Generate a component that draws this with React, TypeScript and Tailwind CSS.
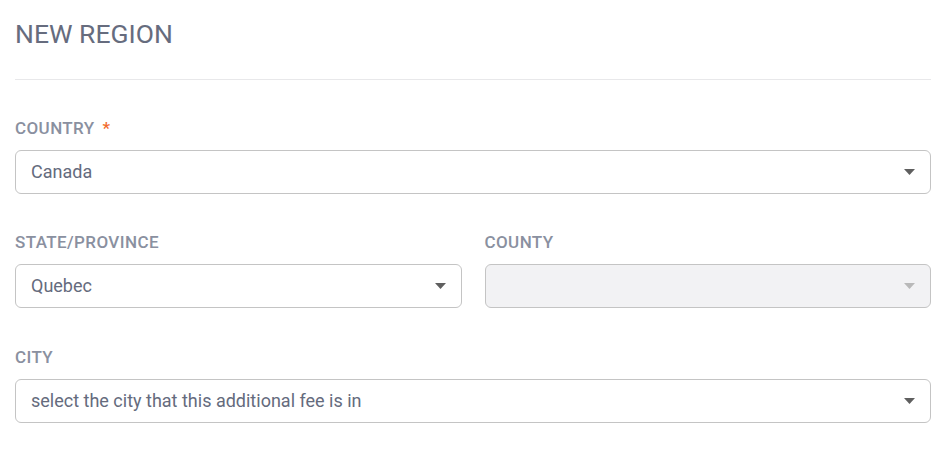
import React from "react";

const font = { fontFamily: "Roboto, 'Noto Sans', sans-serif" };

function Arrow({ disabled }: { disabled?: boolean }) {
  return (
    <svg width="11" height="6" viewBox="0 0 11 6" className="shrink-0">
      <path d="M0 0 L11 0 L5.5 6 Z" fill={disabled ? "#b9b9b9" : "#5f5f5f"} />
    </svg>
  );
}

function Select({ value, disabled }: { value?: string; disabled?: boolean }) {
  return (
    <div
      className={`flex h-[44px] items-center justify-between rounded-[6px] border border-[#c4c4c4] pl-[15px] pr-[15px] ${
        disabled ? "bg-[#f2f2f4]" : "bg-white"
      }`}
    >
      <span className="text-[18px] leading-[22px] text-[#656b7d]">{value}</span>
      <Arrow disabled={disabled} />
    </div>
  );
}

function Label({ children, required }: { children: React.ReactNode; required?: boolean }) {
  return (
    <div className="mb-[12px] flex items-center text-[17px] font-medium leading-[20px] tracking-[0.4px] text-[#8a90a0]">
      {children}
      {required && <span className="ml-[8px] text-[#f26a2b]">*</span>}
    </div>
  );
}

export default function App() {
  return (
    <div className="min-h-[453px] w-[952px] bg-white" style={font}>
      <div className="w-[931px] pl-[15px]">
        <div className="pt-[18px] text-[26.5px] leading-[32px] text-[#666c7e]">NEW REGION</div>
        <div className="mt-[29px] h-px bg-[#e8e8ea]" />
        <div className="mt-[38px]">
          <Label required>COUNTRY</Label>
          <Select value="Canada" />
        </div>
        <div className="mt-[38px] grid grid-cols-2 gap-[23px]">
          <div>
            <Label>STATE/PROVINCE</Label>
            <Select value="Quebec" />
          </div>
          <div>
            <Label>COUNTY</Label>
            <Select disabled />
          </div>
        </div>
        <div className="mt-[39px]">
          <Label>CITY</Label>
          <Select value="select the city that this additional fee is in" />
        </div>
      </div>
    </div>
  );
}
